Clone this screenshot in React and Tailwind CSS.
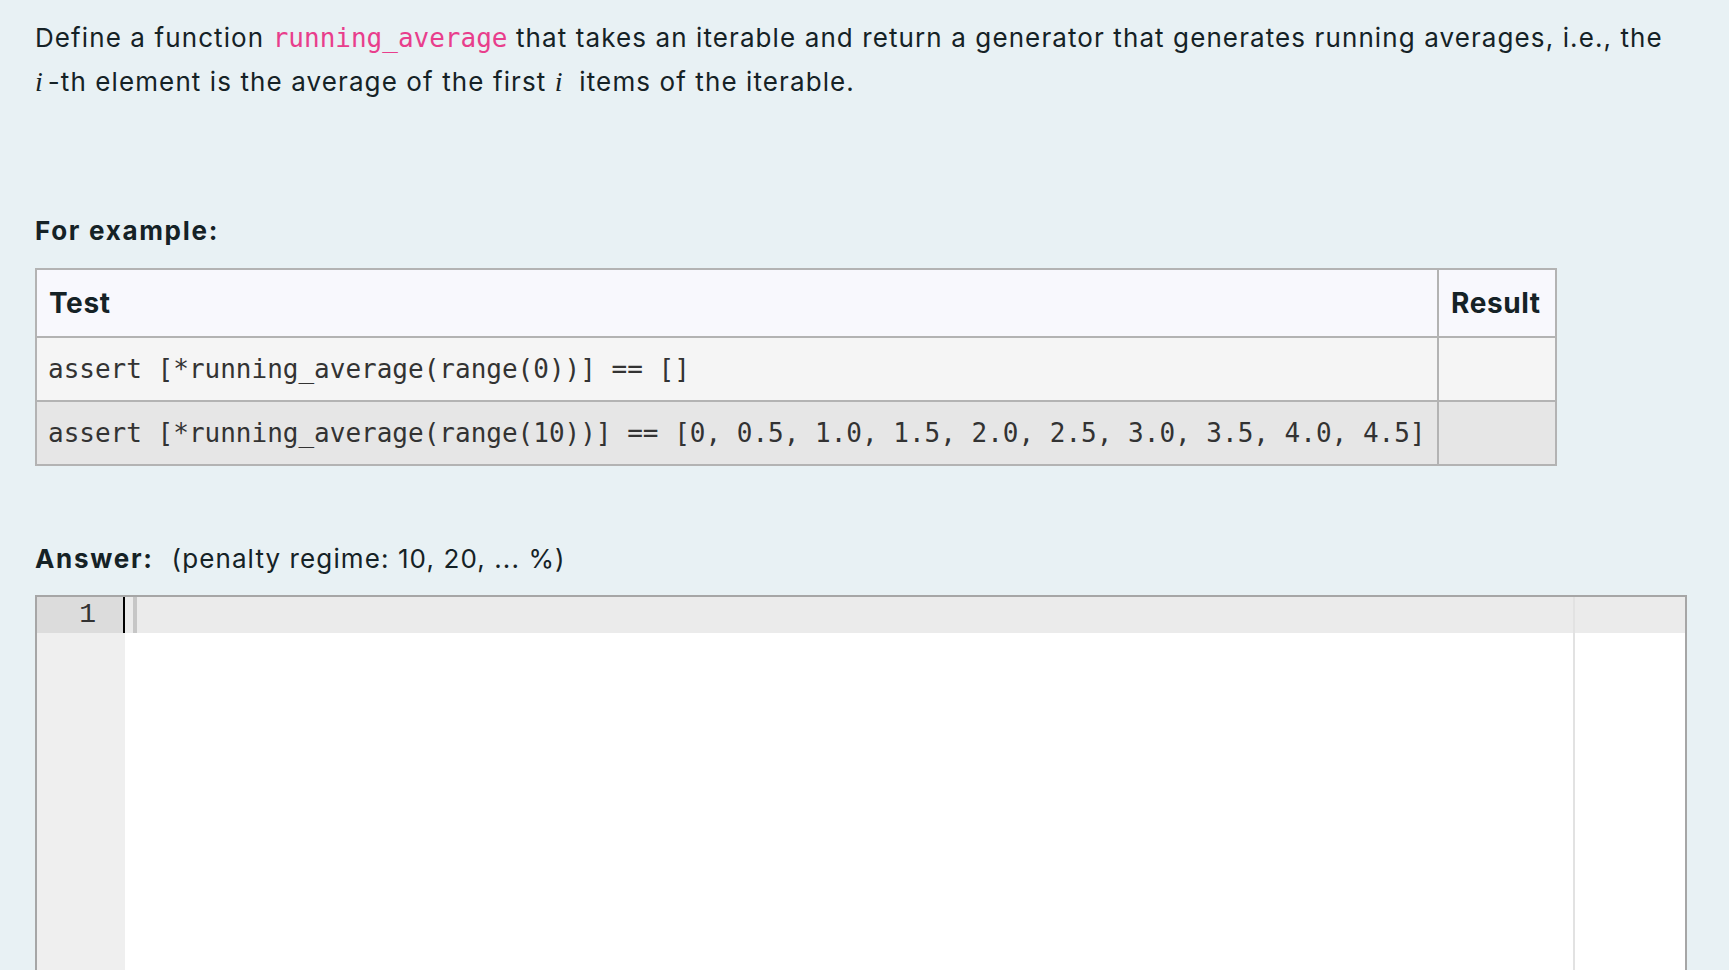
import React from "react";

const mono = "font-['DejaVu_Sans_Mono',monospace]";

const tests = [
  { test: "assert [*running_average(range(0))] == []", result: "", bg: "bg-[#f5f5f5]" },
  {
    test: "assert [*running_average(range(10))] == [0, 0.5, 1.0, 1.5, 2.0, 2.5, 3.0, 3.5, 4.0, 4.5]",
    result: "",
    bg: "bg-[#e6e6e6]",
  },
];

const MathI = ({ gap }) => (
  <span
    className={`font-['Liberation_Serif',serif] italic text-[28px] tracking-normal ${gap ? "mr-[5px]" : ""}`}
  >
    i
  </span>
);

const App = () => {
  return (
    <div className="min-h-screen w-full overflow-hidden bg-[#e8f1f4] px-[35px] pt-[16px] font-['Inter',sans-serif] text-[#152226]">
      <p className="w-[1652px] text-[26px] leading-[44px] tracking-[1.1px]">
        Define a function{" "}
        <code className={`${mono} text-[26px] tracking-normal text-[#e83e8c]`}>running_average</code>{" "}
        that takes an iterable and return a generator that generates running averages, i.e., the{" "}
        <MathI gap />
        -th element is the average of the first <MathI />
        &nbsp; items of the iterable.
      </p>

      <h4 className="mt-[105px] text-[26px] font-bold leading-[44px] tracking-[1.7px]">For example:</h4>

      <div className="mt-[15px] w-[1522px] border-2 border-[#b3b3b3]">
        <div className="flex h-[66px] bg-[#f8f8fd] text-[28px] font-bold tracking-[0.6px]">
          <div className="flex w-[1402px] items-center border-r-2 border-[#b3b3b3] px-[12px]">Test</div>
          <div className="flex flex-1 items-center px-[12px]">Result</div>
        </div>
        {tests.map((row, i) => (
          <div key={i} className={`flex h-[64px] border-t-2 border-[#b3b3b3] ${row.bg}`}>
            <div
              className={`flex w-[1402px] items-center whitespace-pre border-r-2 border-[#b3b3b3] px-[11px] text-[26px] text-[#333] ${mono}`}
            >
              {row.test}
            </div>
            <div className="flex-1">{row.result}</div>
          </div>
        ))}
      </div>

      <div className="mt-[71px] text-[26px] leading-[44px]">
        <span className="font-bold tracking-[1.7px]">Answer:</span>
        <span className="ml-[18px] tracking-[1.1px]">(penalty regime: 10, 20, ... %)</span>
      </div>

      {/* code editor */}
      <div className="relative mt-[14px] flex h-[420px] w-[1652px] border-2 border-[#a6a6a6] bg-white">
        <div className="w-[88px] bg-[#efefef]">
          <div className="flex h-[36px] items-center justify-end bg-[#dcdcdc] pr-[29px] font-['Liberation_Mono',monospace] text-[28px] text-[#333]">
            1
          </div>
        </div>
        <div className="relative flex-1">
          <div className="h-[36px] bg-[#ebebeb]" />
          <div className="absolute left-[-2px] top-0 h-[36px] w-[2px] bg-black" />
          <div className="absolute left-[8px] top-0 h-[36px] w-[4px] bg-[#c6c6c6]" />
          <div className="absolute left-[1448px] top-0 h-full w-[2px] bg-[#e2e2e2]" />
        </div>
      </div>
    </div>
  );
};

export default App;
